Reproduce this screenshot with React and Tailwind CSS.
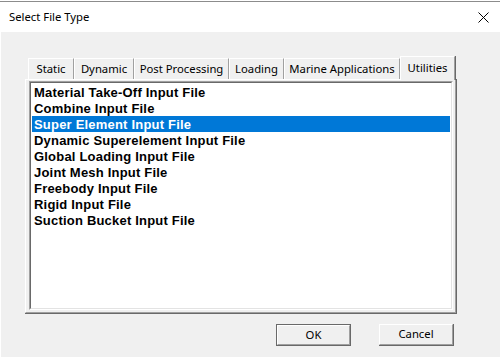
import React from "react";

const tabs = [
  { label: "Static", w: "w-[46px]" },
  { label: "Dynamic", w: "w-[60px]" },
  { label: "Post Processing", w: "w-[95px]" },
  { label: "Loading", w: "w-[55px]" },
  { label: "Marine Applications", w: "w-[116px]" },
];

const items = [
  "Material Take-Off Input File",
  "Combine Input File",
  "Super Element Input File",
  "Dynamic Superelement Input File",
  "Global Loading Input File",
  "Joint Mesh Input File",
  "Freebody Input File",
  "Rigid Input File",
  "Suction Bucket Input File",
];

export default function App() {
  return (
    <div className="w-[500px] h-[359px] overflow-hidden bg-white flex flex-col font-['Noto_Sans',sans-serif] text-black">
      <div className="h-[1px] bg-white" />
      <div className="h-[1px] bg-[#8c8c8c]" />
      <div className="h-[30px] bg-white flex items-center justify-between pl-[9px] pr-[11px]">
        <span className="text-[11.3px] leading-none pb-[1px]">Select File Type</span>
        <svg width="11" height="11" viewBox="0 0 11 11">
          <path d="M0.5 0.5 L10.5 10.5 M10.5 0.5 L0.5 10.5" stroke="#000" strokeWidth="1" fill="none" />
        </svg>
      </div>
      <div className="flex-1 ml-[1px] mb-[2px] bg-[#f0f0f0] flex flex-col pl-[24px] pt-[24px]">
        <div className="flex items-end h-[23px] pl-[3px] relative z-10">
          {tabs.map((t) => (
            <div
              key={t.label}
              className={`${t.w} h-[21px] border-t border-l border-white border-r border-r-[#a0a0a0] shadow-[1px_0_0_#696969] flex items-center justify-center text-[11.3px] leading-none`}
            >
              <span className="pb-[1px]">{t.label}</span>
            </div>
          ))}
          <div className="w-[55px] h-[24px] -mb-[1px] bg-[#f0f0f0] border-t border-l border-white border-r border-r-[#a0a0a0] shadow-[1px_0_0_#696969] flex items-center justify-center text-[11.3px] leading-none">
            <span className="pb-[2px]">Utilities</span>
          </div>
        </div>
        <div className="w-[432px] h-[235px] border-r border-b border-r-[#696969] border-b-[#696969]">
          <div className="w-full h-full border-t border-l border-white border-r border-b border-r-[#a0a0a0] border-b-[#a0a0a0] pl-[3px] pt-[1px]">
            <div className="w-[424px] h-[229px] border-t border-l border-[#a0a0a0] border-r border-b border-r-white border-b-white">
              <div className="w-full h-full bg-white border-t border-l border-[#696969] border-r border-b border-r-[#e3e3e3] border-b-[#e3e3e3] pt-[1px] pl-[1px] pr-[1px]">
                {items.map((it, i) => (
                  <div
                    key={it}
                    className={`h-[16px] flex items-center pl-[2px] font-['Liberation_Sans',Arial,sans-serif] font-bold text-[13px] tracking-[0.2px] leading-none ${
                      i === 2 ? "bg-[#0078d7] text-white" : "text-black"
                    }`}
                  >
                    {it}
                  </div>
                ))}
              </div>
            </div>
          </div>
        </div>
        <div className="flex mt-[10px] pl-[251px] gap-[28px]">
          <div className="w-[75px] h-[22px] border border-[#696969] bg-[#f0f0f0]">
            <div className="w-full h-full border-t border-l border-white border-r border-b border-r-[#a0a0a0] border-b-[#a0a0a0] flex items-center justify-center text-[11.3px] leading-none">
              <span className="pb-[1px]">OK</span>
            </div>
          </div>
          <div className="w-[75px] h-[22px] border-r border-b border-[#696969] bg-[#f0f0f0]">
            <div className="w-full h-full border-t border-l border-white border-r border-b border-r-[#a0a0a0] border-b-[#a0a0a0] flex items-center justify-center text-[11.3px] leading-none">
              <span className="pb-[1px]">Cancel</span>
            </div>
          </div>
        </div>
      </div>
    </div>
  );
}
